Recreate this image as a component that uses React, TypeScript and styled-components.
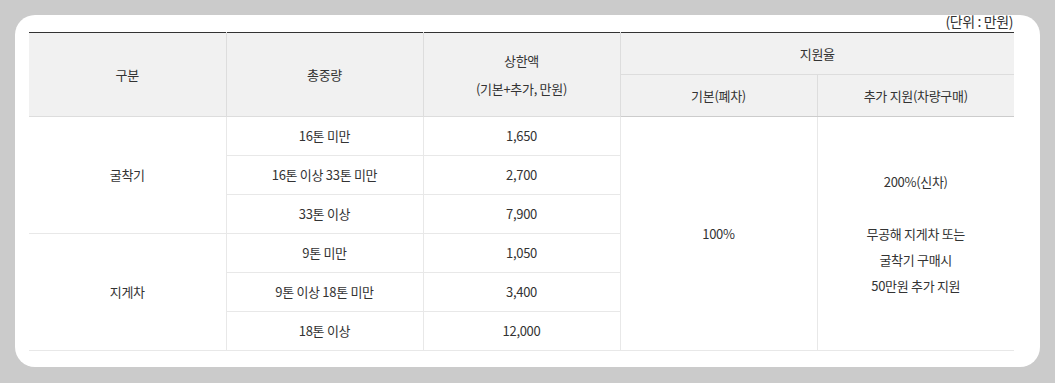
import styled, { createGlobalStyle } from 'styled-components';

const GlobalStyle = createGlobalStyle`
  html, body {
    margin: 0;
    padding: 0;
    background: #cbcbcb;
  }
  body {
    font-family: "Noto Sans CJK KR", "Noto Sans", sans-serif;
    color: #333;
  }
`;

const Card = styled.div`
  box-sizing: border-box;
  width: 1025px;
  height: 352px;
  margin: 15px 0 0 15px;
  padding: 0 26px 0 14px;
  background: #fff;
  border-radius: 20px;
`;

const Unit = styled.div`
  height: 17px;
  font-size: 14px;
  line-height: 13px;
  text-align: right;
  padding-right: 1px;
  letter-spacing: -0.4px;
`;

const Table = styled.table`
  width: 985px;
  border-collapse: collapse;
  table-layout: fixed;
  border-top: 1px solid #333;
  border-bottom: 1px solid #ccc;
  font-size: 13px;
  letter-spacing: -0.3px;
`;

const Th = styled.th<{ $divided?: boolean }>`
  height: 41px;
  padding: 0;
  background: #f1f1f1;
  font-weight: 400;
  color: #333;
  text-align: center;
  vertical-align: middle;
  border-left: ${p => (p.$divided === false ? 'none' : '1px solid #ddd')};
  border-bottom: 1px solid #ddd;
  line-height: 28px;
`;

const HeadRow = styled.tr<{ $last?: boolean }>`
  ${p => (p.$last ? 'th { border-bottom-color: #ccc; }' : '')}
`;

const Td = styled.td<{ $first?: boolean }>`
  height: 38px;
  padding: 0;
  text-align: center;
  vertical-align: middle;
  border-left: ${p => (p.$first ? 'none' : '1px solid #e8e8e8')};
  border-bottom: 1px solid #e8e8e8;
  line-height: 26px;
`;

const rows = [
  { kind: '굴착기', weight: '16톤 미만', limit: '1,650' },
  { kind: '', weight: '16톤 이상 33톤 미만', limit: '2,700' },
  { kind: '', weight: '33톤 이상', limit: '7,900' },
  { kind: '지게차', weight: '9톤 미만', limit: '1,050' },
  { kind: '', weight: '9톤 이상 18톤 미만', limit: '3,400' },
  { kind: '', weight: '18톤 이상', limit: '12,000' },
];

export default function App() {
  return (
    <>
      <GlobalStyle />
      <Card>
        <Unit>(단위 : 만원)</Unit>
        <Table>
          <thead>
            <HeadRow>
              <Th $divided={false} rowSpan={2}>구분</Th>
              <Th rowSpan={2}>총중량</Th>
              <Th rowSpan={2}>
                상한액
                <br />
                (기본+추가, 만원)
              </Th>
              <Th colSpan={2}>지원율</Th>
            </HeadRow>
            <HeadRow $last>
              <Th>기본(폐차)</Th>
              <Th>추가 지원(차량구매)</Th>
            </HeadRow>
          </thead>
          <tbody>
            {rows.map((r, i) => (
              <tr key={i}>
                {i % 3 === 0 && (
                  <Td $first rowSpan={3}>
                    {r.kind}
                  </Td>
                )}
                <Td>{r.weight}</Td>
                <Td>{r.limit}</Td>
                {i === 0 && (
                  <>
                    <Td rowSpan={6}>100%</Td>
                    <Td rowSpan={6}>
                      200%(신차)
                      <br />
                      <br />
                      무공해 지게차 또는
                      <br />
                      굴착기 구매시
                      <br />
                      50만원 추가 지원
                    </Td>
                  </>
                )}
              </tr>
            ))}
          </tbody>
        </Table>
      </Card>
    </>
  );
}
